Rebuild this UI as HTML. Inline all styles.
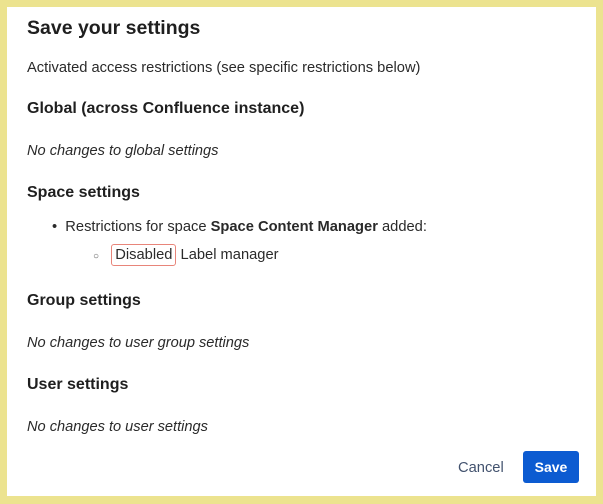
<html><head><style>
body{margin:0;background:#ece38f;font-family:"Liberation Sans",sans-serif;color:#1f1f1f;}
.p{position:absolute;left:7px;top:7px;width:589px;height:489px;background:#fff;}
.t{position:absolute;left:27px;white-space:nowrap;line-height:1;}
h1{font-size:19.5px;font-weight:bold;margin:0}
.h{font-size:16px;font-weight:bold}
.n{font-size:14.7px;color:#2a2a2a}
.i{font-size:14.6px;font-style:italic;color:#2a2a2a}
.b{border:1px solid #e8857a;border-radius:3px;padding:2px 3px;}
</style></head><body>
<div class="p"></div>
<div class="t" style="top:19px"><h1>Save your settings</h1></div>
<div class="t n" style="top:61px">Activated access restrictions (see specific restrictions below)</div>
<div class="t h" style="top:101px">Global (across Confluence instance)</div>
<div class="t i" style="top:144px">No changes to global settings</div>
<div class="t h" style="top:185px">Space settings</div>
<div class="t n" style="top:220px;left:52px">•&nbsp;&nbsp;Restrictions for space <b>Space Content Manager</b> added:</div>
<div class="t n" style="top:248px;left:93px"><span style="font-size:10px;color:#555">○</span>&nbsp;&nbsp;&nbsp;<span class="b">Disabled</span> Label manager</div>
<div class="t h" style="top:293px">Group settings</div>
<div class="t i" style="top:336px">No changes to user group settings</div>
<div class="t h" style="top:377px">User settings</div>
<div class="t i" style="top:420px">No changes to user settings</div>
<div class="t n" style="top:461px;left:458px;color:#42526e">Cancel</div>
<div style="position:absolute;left:523px;top:451px;width:56px;height:32px;background:#0c5bd1;border-radius:3px;color:#fff;font-weight:bold;font-size:14px;text-align:center;line-height:32px">Save</div>
</body></html>
